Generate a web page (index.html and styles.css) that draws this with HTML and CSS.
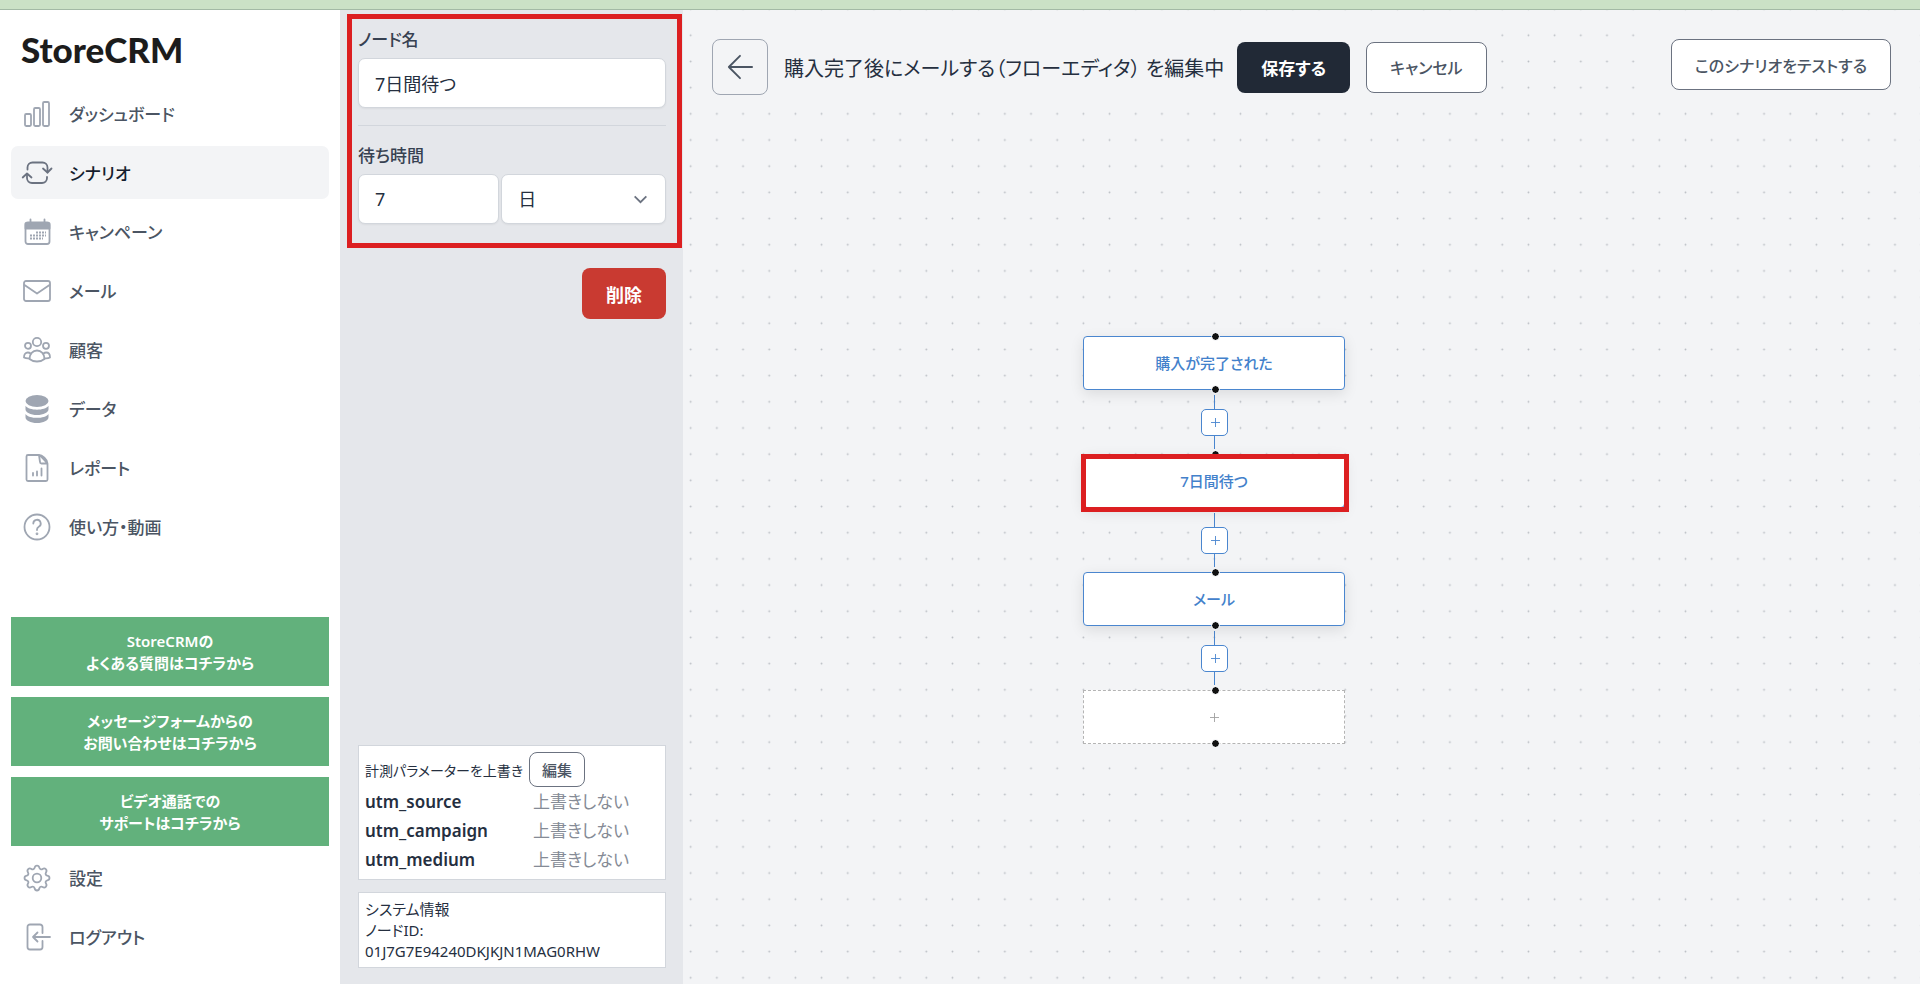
FILE: index.html
```html
<!DOCTYPE html>
<html lang="ja">
<head>
  <meta charset="UTF-8">
  <meta name="viewport" content="width=device-width, initial-scale=1.0">
  <title>StoreCRM</title>
  <link rel="stylesheet" href="styles.css">
</head>
<body>
  <div class="topbar"></div>
  <div class="app">
    <!-- サイドバー -->
    <aside class="sidebar">
      <div class="logo">StoreCRM</div>
      <nav class="nav">
        <a href="#" class="nav-item">
          <svg class="icon" viewBox="0 0 28 28"><rect x="2" y="14" width="6" height="12" rx="1.2"/><rect x="11" y="8" width="6" height="18" rx="1.2"/><rect x="20" y="2" width="6" height="24" rx="1.2"/></svg>
          ダッシュボード
        </a>
        <a href="#" class="nav-item active">
          <svg class="icon" viewBox="0 0 28 28"><path d="M4.500 10.500V8.500a5 5 0 0 1 5-5h10a5 5 0 0 1 5 5v5"/><path d="M20 9.500l4.500 4 4-4"/><path d="M24 18v1a5 5 0 0 1-5 5H9a5 5 0 0 1-5-5v-4"/><path d="M-.3 18.500L4 14.500l4.500 4"/></svg>
          シナリオ
        </a>
        <a href="#" class="nav-item">
          <svg class="icon" viewBox="0 0 28 28"><rect x="2.500" y="4.500" width="24" height="21.500" rx="2.500"/><path class="fill" d="M2.500 5.500h24v5h-24z"/><path d="M7.500 1.500v4M21.500 1.500v4"/><path class="dots" d="M13 14.500h10M7 17.500h16M7 20.500h13"/></svg>
          キャンペーン
        </a>
        <a href="#" class="nav-item">
          <svg class="icon" viewBox="0 0 28 28"><rect x="1" y="4" width="26" height="20" rx="2"/><path d="M1.500 8l12.500 8.500L26.500 8"/></svg>
          メール
        </a>
        <a href="#" class="nav-item">
          <svg class="icon" viewBox="0 0 28 28"><circle cx="14" cy="6" r="4.200"/><circle cx="5" cy="9.800" r="3"/><circle cx="23" cy="9.800" r="3"/><path d="M6.500 23c0-5 3.200-8.500 7.500-8.500s7.500 3.500 7.500 8.500c-2 1.700-4.500 2.500-7.500 2.500s-5.500-.8-7.500-2.500z"/><path d="M7.500 17.500c-.8-.7-1.700-1-2.700-1C2.600 16.500 1 18.300 1 21.500c1.500.8 3.500 1 5.300.8M20.500 17.500c.8-.7 1.700-1 2.700-1 2.200 0 3.800 1.800 3.800 5-1.500.8-3.500 1-5.300.8"/></svg>
          顧客
        </a>
        <a href="#" class="nav-item">
          <svg class="icon solid" viewBox="0 0 28 28"><ellipse cx="14" cy="6" rx="11.500" ry="6"/><path d="M2.500 10.800C4.500 13.400 9 14.700 14 14.700s9.500-1.300 11.500-3.900v3.400c0 3.200-5.100 5.800-11.500 5.800S2.500 17.400 2.500 14.200zM2.500 18.900c2 2.600 6.500 3.900 11.500 3.900s9.500-1.300 11.500-3.900v3.300c0 3.200-5.100 5.800-11.500 5.800S2.500 25.400 2.500 22.200z"/></svg>
          データ
        </a>
        <a href="#" class="nav-item">
          <svg class="icon" viewBox="0 0 28 28"><path d="M16.500 1H5a1.500 1.500 0 0 0-1.500 1.500v23A1.500 1.500 0 0 0 5 27h18a1.500 1.500 0 0 0 1.500-1.500V9.500zM16 1c3 0 8.500 4.500 8.500 8.500h-6a1.500 1.500 0 0 1-1.500-1.500z"/><path d="M10 19v2.500M14 17.500v4M18.500 14.500v7"/></svg>
          レポート
        </a>
        <a href="#" class="nav-item">
          <svg class="icon" viewBox="0 0 28 28"><circle cx="14" cy="14" r="12.500"/><path d="M10.300 10.500a3.700 3.700 0 1 1 5.500 3.200c-1.200.7-1.800 1.400-1.800 2.800v.5"/><circle class="fill" cx="14" cy="20.800" r=".5"/></svg>
          使い方・動画
        </a>
      </nav>
      <div class="sidebar-bottom">
        <div class="support">
          <a href="#" class="support-link">StoreCRMの<br>よくある質問はコチラから</a>
          <a href="#" class="support-link">メッセージフォームからの<br>お問い合わせはコチラから</a>
          <a href="#" class="support-link">ビデオ通話での<br>サポートはコチラから</a>
        </div>
        <div class="nav">
          <a href="#" class="nav-item">
            <svg class="icon" viewBox="0 0 28 28"><circle cx="14" cy="14" r="4.300"/><path d="M11.600 3.700c.6-2.900 4.200-2.900 4.800 0 .4 1.600 1.900 2.200 3.200 1.300 2.400-1.600 5 1 3.400 3.400-.9 1.300-.3 2.800 1.300 3.200 2.900.6 2.900 4.200 0 4.800-1.600.4-2.200 1.900-1.300 3.200 1.600 2.400-1 5-3.400 3.400-1.300-.9-2.800-.3-3.200 1.300-.6 2.900-4.200 2.900-4.800 0-.4-1.600-1.900-2.200-3.200-1.300-2.400 1.600-5-1-3.400-3.400.9-1.300.3-2.800-1.300-3.200-2.900-.6-2.900-4.200 0-4.800 1.600-.4 2.200-1.900 1.300-3.200-1.600-2.400 1-5 3.400-3.400 1.300.9 2.800.3 3.200-1.300z"/></svg>
            設定
          </a>
          <a href="#" class="nav-item">
            <svg class="icon" viewBox="0 0 28 28"><path d="M19.500 10V4a2.500 2.500 0 0 0-2.500-2.500H7A2.500 2.500 0 0 0 4.500 4v20A2.500 2.500 0 0 0 7 26.500h10a2.500 2.500 0 0 0 2.500-2.500v-6"/><path d="M27 14H10M14.500 9.500L10 14l4.500 4.500"/></svg>
            ログアウト
          </a>
        </div>
      </div>
    </aside>

    <!-- ノード設定 -->
    <section class="panel">
      <form class="node-form">
        <label for="nodeName">ノード名</label>
        <input class="field" type="text" id="nodeName" value="7日間待つ">
        <hr>
        <label for="waitTime">待ち時間</label>
        <div class="wait-row">
          <input class="field" type="text" id="waitTime" value="7">
          <div class="select-wrap">
            <select class="field" aria-label="単位">
              <option>分</option>
              <option>時間</option>
              <option selected>日</option>
            </select>
            <svg class="chevron" viewBox="0 0 16 10"><path d="M1.500 1.500L8 8l6.500-6.500"/></svg>
          </div>
        </div>
      </form>
      <button type="button" class="btn btn-danger">削除</button>

      <div class="panel-bottom">
        <div class="box">
          <div class="box-head">計測パラメーターを上書き <button type="button" class="btn-small">編集</button></div>
          <dl class="params">
            <dt>utm_source</dt><dd>上書きしない</dd>
            <dt>utm_campaign</dt><dd>上書きしない</dd>
            <dt>utm_medium</dt><dd>上書きしない</dd>
          </dl>
        </div>
        <div class="box system">
          <div>システム情報</div>
          <div>ノードID:</div>
          <div>01J7G7E94240DKJKJN1MAG0RHW</div>
        </div>
      </div>
    </section>

    <!-- フローエディタ -->
    <main class="editor">
      <svg class="grid">
        <pattern id="dots" width="20" height="20" patternUnits="userSpaceOnUse" patternTransform="translate(-5.400 12.200) scale(1.309)">
          <circle cx="10" cy="10" r=".7" fill="#b9bdc3"/>
        </pattern>
        <rect width="100%" height="100%" fill="url(#dots)"/>
      </svg>
      <header class="toolbar">
        <div class="toolbar-group">
          <button type="button" class="back" aria-label="戻る">
            <svg viewBox="0 0 28 28"><path d="M27 14H2M14 2L2 14l12 12"/></svg>
          </button>
          <h1 class="title">購入完了後にメールする（フローエディタ） を編集中</h1>
          <button type="button" class="btn btn-dark">保存する</button>
          <button type="button" class="btn btn-outline">キャンセル</button>
        </div>
        <div class="toolbar-group">
          <button type="button" class="btn btn-outline">このシナリオをテストする</button>
        </div>
      </header>

      <div class="flow">
        <div class="node">購入が完了された</div>
        <div class="edge"><button type="button" class="add" aria-label="ノードを追加"><svg viewBox="0 0 10 10"><path d="M5 0v10M0 5h10"/></svg></button></div>
        <div class="node selected">7日間待つ</div>
        <div class="edge"><button type="button" class="add" aria-label="ノードを追加"><svg viewBox="0 0 10 10"><path d="M5 0v10M0 5h10"/></svg></button></div>
        <div class="node">メール</div>
        <div class="edge"><button type="button" class="add" aria-label="ノードを追加"><svg viewBox="0 0 10 10"><path d="M5 0v10M0 5h10"/></svg></button></div>
        <div class="node empty"><svg viewBox="0 0 10 10"><path d="M5 0v10M0 5h10"/></svg></div>
      </div>
    </main>
  </div>
</body>
</html>
```
FILE: styles.css
```css
* {
  margin: 0;
  padding: 0;
  box-sizing: border-box;
}
html, body {
  height: 100%;
}
body {
  display: flex;
  flex-direction: column;
  font-family: "Noto Sans", "Noto Sans CJK JP", sans-serif;
  font-feature-settings: "palt";
  font-size: 18px;
  color: #252f3f;
  background: #f3f4f6;
}
button, input, select {
  font: inherit;
  font-feature-settings: inherit;
  color: inherit;
}
button {
  cursor: pointer;
}
a {
  text-decoration: none;
}
svg {
  fill: none;
  stroke: currentColor;
}
.topbar {
  flex: none;
  height: 10px;
  background: #cbe1c6;
  border-bottom: 1px solid #a3b9a5;
}
.app {
  flex: 1;
  display: flex;
  min-height: 0;
}

/* サイドバー */
.sidebar {
  flex: none;
  width: 340px;
  padding: 18px 11px 21px;
  display: flex;
  flex-direction: column;
  background: #fff;
}
.logo {
  padding-left: 10px;
  margin-bottom: 17px;
  font-family: Lato, sans-serif;
  font-size: 35px;
  font-weight: 900;
  line-height: 42px;
  color: #1c1c1c;
}
.nav {
  display: flex;
  flex-direction: column;
  gap: 6px;
}
.nav-item {
  display: flex;
  align-items: center;
  gap: 18px;
  height: 53px;
  padding: 0 12px;
  border-radius: 7px;
  font-size: 17px;
  font-weight: 500;
  color: #4b5563;
}
.nav-item.active {
  background: #f3f4f6;
  color: #161e2e;
}
.icon {
  flex: none;
  width: 28px;
  height: 28px;
  color: #9fa6b2;
  stroke-width: 1.8;
  stroke-linecap: round;
  stroke-linejoin: round;
  overflow: visible;
}
.active .icon {
  color: #6b7280;
}
.icon.solid {
  fill: currentColor;
  stroke: none;
}
.icon .fill {
  fill: currentColor;
}
.icon .dots {
  stroke-dasharray: 2 1;
  stroke-linecap: butt;
  stroke-width: 2;
}
.sidebar-bottom {
  margin-top: auto;
}
.support {
  display: flex;
  flex-direction: column;
  gap: 11px;
  margin-bottom: 5px;
}
.support-link {
  padding: 13px 0 12px;
  background: #62b17c;
  font-size: 15px;
  font-weight: 600;
  line-height: 22px;
  text-align: center;
  color: #fff;
}

/* ノード設定 */
.panel {
  flex: none;
  width: 343px;
  padding: 4px 17px 16px 18px;
  display: flex;
  flex-direction: column;
  background: #e5e7eb;
}
.node-form {
  margin: 0 -16px 20px -11px;
  padding: 8px 11px 19px 6px;
  border: 5px solid #dc1f21;
}
.node-form label {
  display: block;
  margin-bottom: 5px;
  font-size: 17px;
  font-weight: 500;
  line-height: 26px;
  color: #374151;
}
.node-form hr {
  margin: 17px 0;
  border: 0;
  border-top: 1px solid #d2d6dc;
}
.field {
  display: block;
  width: 100%;
  height: 50px;
  padding: 0 16px;
  border: 1px solid #d2d6dc;
  border-radius: 7px;
  background: #fff;
  box-shadow: 0 1px 2px rgba(0, 0, 0, 0.05);
  appearance: none;
}
.wait-row {
  display: grid;
  grid-template-columns: 6fr 7fr;
  gap: 2px;
}
.select-wrap {
  position: relative;
}
.chevron {
  position: absolute;
  top: 21px;
  right: 18px;
  width: 15px;
  height: 9px;
  color: #6b7280;
  stroke-width: 2;
  pointer-events: none;
}
.btn {
  height: 51px;
  padding: 0 23px;
  border: 1px solid transparent;
  border-radius: 8px;
  font-weight: 500;
  white-space: nowrap;
}
.btn-danger {
  align-self: flex-end;
  background: #c93a31;
  font-weight: 700;
  color: #fff;
}
.btn-dark {
  background: #212936;
  font-size: 17px;
  font-weight: 700;
  color: #fff;
}
.btn-outline {
  background: #fff;
  border-color: #6b7280;
  font-size: 16px;
  color: #4b5563;
}
.panel-bottom {
  margin-top: auto;
  display: flex;
  flex-direction: column;
  gap: 12px;
}
.box {
  padding: 6px 6px 5px;
  border: 1px solid #d2d6dc;
  background: #fff;
}
.box-head {
  display: flex;
  align-items: center;
  gap: 6px;
  font-size: 14px;
  white-space: nowrap;
}
.btn-small {
  height: 35px;
  padding: 0 12px;
  border: 1px solid #6b7280;
  border-radius: 8px;
  background: #fff;
  font-size: 15px;
  font-weight: 500;
  color: #4b5563;
}
.params {
  display: grid;
  grid-template-columns: 168px 1fr;
  font-size: 17px;
  line-height: 29px;
}
.params dt {
  font-weight: 600;
}
.params dd {
  color: #858b96;
}
.system {
  font-size: 15px;
  line-height: 21px;
}

/* フローエディタ */
.editor {
  flex: 1;
  position: relative;
  overflow: hidden;
}
.grid {
  position: absolute;
  inset: 0;
  width: 100%;
  height: 100%;
  stroke: none;
}
.toolbar {
  position: relative;
  display: flex;
  justify-content: space-between;
  align-items: flex-start;
  padding: 15px 15px 0;
}
.toolbar-group {
  display: flex;
  align-items: center;
  padding: 14px;
  background: #f3f4f6;
}
.back {
  display: flex;
  align-items: center;
  justify-content: center;
  width: 56px;
  height: 56px;
  border: 1px solid #9fa6b2;
  border-radius: 8px;
  background: #f3f4f6;
  color: #4b5563;
}
.back svg {
  width: 26px;
  height: 26px;
  stroke-width: 2;
  stroke-linecap: round;
  stroke-linejoin: round;
}
.title {
  margin: 0 13px 0 16px;
  font-size: 20px;
  font-weight: 400;
  white-space: nowrap;
}
.toolbar .btn + .btn {
  margin-left: 16px;
}
.flow {
  position: absolute;
  top: 326px;
  left: 400px;
  width: 262px;
}
.node {
  position: relative;
  display: flex;
  align-items: center;
  justify-content: center;
  height: 54px;
  border: 1px solid #4a86cf;
  border-radius: 4px;
  background: #fff;
  box-shadow: 0 4px 14px rgba(0, 0, 0, 0.1);
  font-size: 15px;
  font-weight: 500;
  line-height: 20px;
  color: #4381cb;
}
.node svg, .add svg {
  width: 9px;
  height: 9px;
}
/* 上下の接続点 */
.node::before, .node::after {
  content: "";
  position: absolute;
  left: 50%;
  width: 7px;
  height: 7px;
  margin-left: -3px;
  border: 1px solid #f3f4f6;
  border-radius: 50%;
  background: #111;
  background-clip: padding-box;
}
.node::before {
  top: -5px;
}
.node::after {
  bottom: -5px;
}
/* 選択中のノードの赤枠 */
.node.selected::after {
  inset: -1px -5px -5px -3px;
  width: auto;
  height: auto;
  margin: 0;
  border: 5px solid #dc1f21;
  border-radius: 0;
  background: none;
}
.node.empty {
  border: 1px dashed #b4b4b4;
  border-radius: 0;
  box-shadow: none;
  color: #a0a0a0;
}
.edge {
  display: flex;
  align-items: center;
  justify-content: center;
  height: 64px;
  background: linear-gradient(#4a86cf, #4a86cf) center / 1px 54px no-repeat;
}
.add {
  display: flex;
  align-items: center;
  justify-content: center;
  width: 27px;
  height: 27px;
  padding-left: 3px;
  border: 1px solid #4a86cf;
  border-radius: 5px;
  background: #fff;
  color: #4a86cf;
}
```
